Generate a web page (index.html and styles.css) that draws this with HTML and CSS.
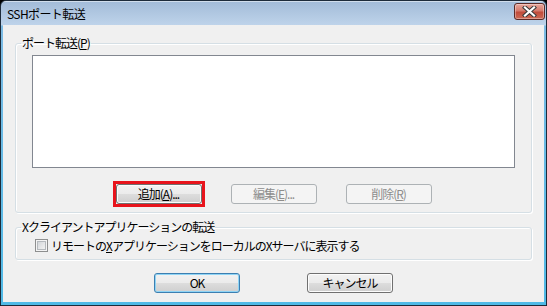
FILE: index.html
```html
<!DOCTYPE html>
<html lang="ja">
<head>
  <meta charset="UTF-8">
  <title>SSHポート転送</title>
  <link rel="stylesheet" href="styles.css">
</head>
<body>

<div class="window">
  <div class="titlebar">
    <span class="title">SSHポート転送</span>
    <button class="close" title="閉じる">
      <svg width="17" height="11" viewBox="0 0 17 11">
        <path d="M4 1.5 L13 9.5 M13 1.5 L4 9.5" stroke="#3b3b3b" stroke-width="4.2" stroke-linecap="square"/>
        <path d="M4 1.5 L13 9.5 M13 1.5 L4 9.5" stroke="#fff" stroke-width="2.2" stroke-linecap="square"/>
      </svg>
    </button>
  </div>

  <div class="client">
    <fieldset class="group">
      <legend>ポート転送(<u>P</u>)</legend>
      <div class="listbox"></div>
      <div class="button-row">
        <span class="highlight"><button class="btn">追加(<u>A</u>)...</button></span>
        <button class="btn" disabled>編集(<u>E</u>)...</button>
        <button class="btn" disabled>削除(<u>R</u>)</button>
      </div>
    </fieldset>

    <fieldset class="group group-x">
      <legend>Xクライアントアプリケーションの転送</legend>
      <label class="check-row">
        <span class="check"></span>
        <span>リモートの<u>X</u>アプリケーションをローカルのXサーバに表示する</span>
      </label>
    </fieldset>

    <div class="dialog-buttons">
      <button class="btn default">OK</button>
      <button class="btn">キャンセル</button>
    </div>
  </div>
</div>

</body>
</html>
```

FILE: styles.css
```css
body {
  margin: 0;
  padding: 0;
  background-color: #000;
  font-family: "Noto Sans CJK JP", "Liberation Sans", sans-serif;
  font-size: 12px;
  color: #000;
}
.window {
  width: 547px;
  height: 306px;
  box-sizing: border-box;
  border: 1px solid #1d2b3a;
  border-radius: 6px 6px 0 0;
  background: linear-gradient(to bottom, #a2bbd8 0, #bed3ea 24px, #7dbbe4 25px, #4fb9e6 100%);
  display: flex;
  flex-direction: column;
  overflow: hidden;
}
.titlebar {
  height: 24px;
  display: flex;
  align-items: center;
  justify-content: space-between;
  padding: 0 1px 0 6px;
  box-shadow: inset 0 1px 0 rgba(255, 255, 255, 0.5);
}
.title {
  font-size: 12px;
  letter-spacing: -0.6px;
  color: #000;
  margin-top: 1px;
}
.close {
  width: 31px;
  height: 17px;
  margin-top: -4px;
  padding: 0;
  border: 1px solid #5b2a26;
  border-radius: 3px;
  background: linear-gradient(to bottom, #e8a79c 0, #d57a6c 45%, #c14c3b 55%, #cd6a55 100%);
  box-shadow: inset 0 0 0 1px rgba(255, 255, 255, 0.35);
  display: flex;
  align-items: center;
  justify-content: center;
}
.client {
  flex: 1;
  margin: 0 2px 3px 2px;
  background-color: #f0f0f0;
  padding: 10px 12px 0 12px;
  letter-spacing: -1px;
}
.group {
  margin: 0;
  min-width: 0;
  border: 1px solid #d5dfe5;
  border-radius: 3px;
  box-shadow: 1px 1px 0 #fff, inset 1px 1px 0 #fff;
  padding: 4px 16px 8px 16px;
}
.group legend {
  margin-left: -11px;
  padding: 0 1px;
  line-height: 16px;
}
.listbox {
  height: 111px;
  background-color: #fff;
  border: 1px solid #828790;
}
.button-row {
  display: flex;
  justify-content: center;
  gap: 29px;
  margin-top: 16px;
}
.btn {
  width: 86px;
  height: 20px;
  padding: 0;
  font-family: inherit;
  font-size: 12px;
  letter-spacing: -1px;
  line-height: 16px;
  color: #000;
  border: 1px solid #707070;
  border-radius: 3px;
  background: linear-gradient(to bottom, #f2f2f2 0, #ebebeb 50%, #dddddd 51%, #cfcfcf 100%);
  box-shadow: inset 0 0 0 1px #fcfcfc;
}
.btn:disabled {
  color: #8d8d8d;
  border-color: #adb2b5;
  background: #f4f4f4;
  box-shadow: none;
}
.highlight {
  display: flex;
  margin: -3px;
  border: 3px solid #e8141c;
}
.btn.default {
  border-color: #3c7fb1;
  box-shadow: inset 0 0 0 1px #8fd4f5;
}
.group-x {
  margin-top: 6px;
  padding: 2px 16px 6px 19px;
}
.group-x legend {
  margin-left: -14px;
}
.check-row {
  display: flex;
  align-items: center;
  height: 16px;
  gap: 3px;
}
.check {
  width: 11px;
  height: 11px;
  border: 1px solid #8e8f8f;
  background: linear-gradient(135deg, #c9cdd2 0, #e8e9ea 60%, #f7f7f7 100%);
  box-shadow: inset 0 0 0 1px #f4f4f4, inset 0 0 0 2px #b5b9bd;
}
.dialog-buttons {
  display: flex;
  justify-content: center;
  gap: 67px;
  margin-top: 13px;
}
```
